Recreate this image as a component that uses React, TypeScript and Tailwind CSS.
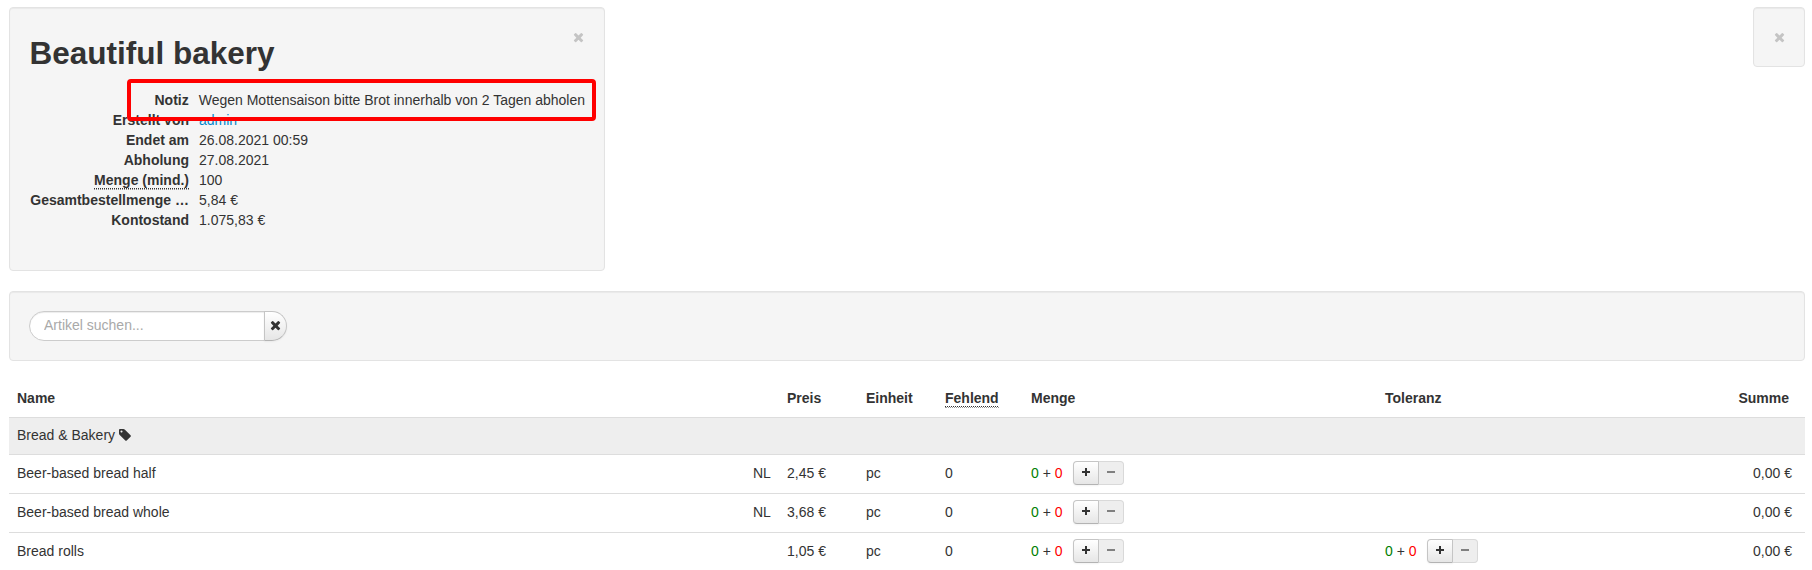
import React from 'react';

const well = 'rounded-[4px] border border-[#e3e3e3] bg-[#f5f5f5] shadow-[inset_0_1px_1px_rgba(0,0,0,0.05)]';

function CrossIcon({ className }: { className: string }) {
  return (
    <svg viewBox="0 0 1408 1408" className={className} fill="currentColor">
      <path d="M1298 1086q0 40-28 68l-136 136q-28 28-68 28t-68-28L704 996l-294 294q-28 28-68 28t-68-28L138 1154q-28-28-28-68t28-68l294-294L138 430q-28-28-28-68t28-68l136-136q28-28 68-28t68 28l294 294 294-294q28-28 68-28t68 28l136 136q28 28 28 68t-28 68L976 724l294 294q28 28 28 68z" />
    </svg>
  );
}

function TagIcon() {
  return (
    <svg viewBox="0 0 1536 1536" className="ml-1 h-[12px] w-[12px]" fill="currentColor">
      <path d="M448 320q0-53-37.500-90.500T320 192t-90.500 37.500T192 320t37.500 90.500T320 448t90.500-37.500T448 320zm1067 576q0 53-37 90l-491 492q-39 37-91 37-53 0-90-37L91 762q-38-37-64.500-101T0 544V128q0-52 38-90t90-38h416q53 0 117 26.500T763 91l715 714q37 39 37 91z" />
    </svg>
  );
}

function Stepper() {
  return (
    <div className="flex items-center">
      <span className="whitespace-pre"><span className="text-[#008000]">0</span> + <span className="text-[#ff0000]">0</span></span>
      <div className="ml-[10px] flex">
        <button className="flex h-6 w-[26px] items-center justify-center rounded-l-[4px] border border-[#c5c5c5] border-b-[#b3b3b3] bg-linear-to-b from-white to-[#e6e6e6] shadow-[inset_0_1px_0_rgba(255,255,255,0.2),0_1px_2px_rgba(0,0,0,0.05)]">
          <svg viewBox="0 0 8 8" className="mb-[2px] ml-[1px] h-2 w-2" fill="#333333"><path d="M3 0h2v3h3v2H5v3H3V5H0V3h3z" /></svg>
        </button>
        <button className="-ml-px flex h-6 w-[26px] items-center justify-center rounded-r-[4px] border border-[#d9d9d9] border-l-[#c5c5c5] bg-[#eeeeee]">
          <svg viewBox="0 0 8 8" className="mb-[2px] h-2 w-2" fill="#808080"><path d="M0 3h8v2H0z" /></svg>
        </button>
      </div>
    </div>
  );
}

const details: { label: string; value: string; abbr?: boolean; link?: boolean }[] = [
  { label: 'Notiz', value: 'Wegen Mottensaison bitte Brot innerhalb von 2 Tagen abholen' },
  { label: 'Erstellt von', value: 'admin', link: true },
  { label: 'Endet am', value: '26.08.2021 00:59' },
  { label: 'Abholung', value: '27.08.2021' },
  { label: 'Menge (mind.)', value: '100', abbr: true },
  { label: 'Gesamtbestellmenge …', value: '5,84 €' },
  { label: 'Kontostand', value: '1.075,83 €' },
];

const articles = [
  { name: 'Beer-based bread half', origin: 'NL', price: '2,45 €', tolerance: false },
  { name: 'Beer-based bread whole', origin: 'NL', price: '3,68 €', tolerance: false },
  { name: 'Bread rolls', origin: '', price: '1,05 €', tolerance: true },
];

const grid = 'grid grid-cols-[736px_34px_79px_79px_86px_354px_1fr] items-center pl-2';

function Abbr({ text }: { text: string }) {
  return (
    <span className="inline-block h-[20px] border-b border-dotted border-[#999999] align-top">
      <span className="underline decoration-dotted decoration-1 underline-offset-[3px]">{text}</span>
    </span>
  );
}

export default function App() {
  return (
    <div className="h-[570px] overflow-hidden bg-white pt-[7px] pr-[7px] pl-[9px] font-['Liberation_Sans',Arial,sans-serif] text-[14px] leading-5 text-[#333333]">
      <div className="flex items-start justify-between">
        <section className={`${well} relative h-[264px] w-[596px] px-[19px] pt-[25px]`}>
          <button className="absolute top-[24px] right-[20px] text-[#c4c4c4]"><CrossIcon className="h-[11px] w-[11px]" /></button>
          <h2 className="pl-[0.5px] text-[31.5px] leading-10 font-bold">Beautiful bakery</h2>
          <dl className="mt-[17px]">
            {details.map((d) => (
              <div key={d.label} className="flex h-5 gap-[10px] whitespace-nowrap">
                <dt className="flex w-[160px] justify-end font-bold">
                  {d.abbr ? <Abbr text={d.label} /> : d.label}
                </dt>
                <dd className={d.link ? 'text-[#0088cc]' : ''}>{d.value}</dd>
              </div>
            ))}
          </dl>
          <div className="absolute top-[71px] left-[117px] h-[42px] w-[469px] rounded-[4px] border-4 border-[#ff0000]" />
        </section>
        <section className={`${well} flex h-[60px] w-[52px] items-center justify-center`}>
          <button className="text-[#c4c4c4]"><CrossIcon className="h-[11px] w-[11px]" /></button>
        </section>
      </div>

      <section className={`${well} mt-5 flex h-[70px] px-[19px] pt-[19px]`}>
        <input
          aria-label="Artikel suchen"
          placeholder="Artikel suchen..."
          className="h-[30px] w-[236px] rounded-l-[15px] border border-[#cccccc] bg-white px-[14px] pb-[2px] shadow-[inset_0_1px_1px_rgba(0,0,0,0.075)] placeholder:text-[#a9a9a9]"
        />
        <button className="-ml-px flex h-[30px] w-[23px] items-center justify-center rounded-r-[15px] border border-[#c5c5c5] border-b-[#b3b3b3] bg-linear-to-b from-white to-[#e6e6e6] pb-[2px] shadow-[0_1px_2px_rgba(0,0,0,0.05)]">
          <CrossIcon className="h-[11px] w-[11px]" />
        </button>
      </section>

      <div className="mt-[20px]">
        <div className={`${grid} h-[36px] pb-[2px] font-bold`}>
          <span>Name</span>
          <span />
          <span>Preis</span>
          <span>Einheit</span>
          <span><Abbr text="Fehlend" /></span>
          <span>Menge</span>
          <div className="flex justify-between pr-[16px]">
            <span>Toleranz</span>
            <span>Summe</span>
          </div>
        </div>
        <div className="flex h-[37px] items-center border-t border-[#dddddd] bg-[#eeeeee] px-2 pb-[2px]">
          Bread &amp; Bakery <TagIcon />
        </div>
        {articles.map((a) => (
          <div key={a.name} className={`${grid} h-[39px] border-t border-[#dddddd] pb-[2px]`}>
            <span>{a.name}</span>
            <span>{a.origin}</span>
            <span>{a.price}</span>
            <span>pc</span>
            <span>0</span>
            <Stepper />
            <div className="flex items-center justify-between pr-[13px]">
              {a.tolerance ? <Stepper /> : <span />}
              <span>0,00 €</span>
            </div>
          </div>
        ))}
      </div>
    </div>
  );
}
